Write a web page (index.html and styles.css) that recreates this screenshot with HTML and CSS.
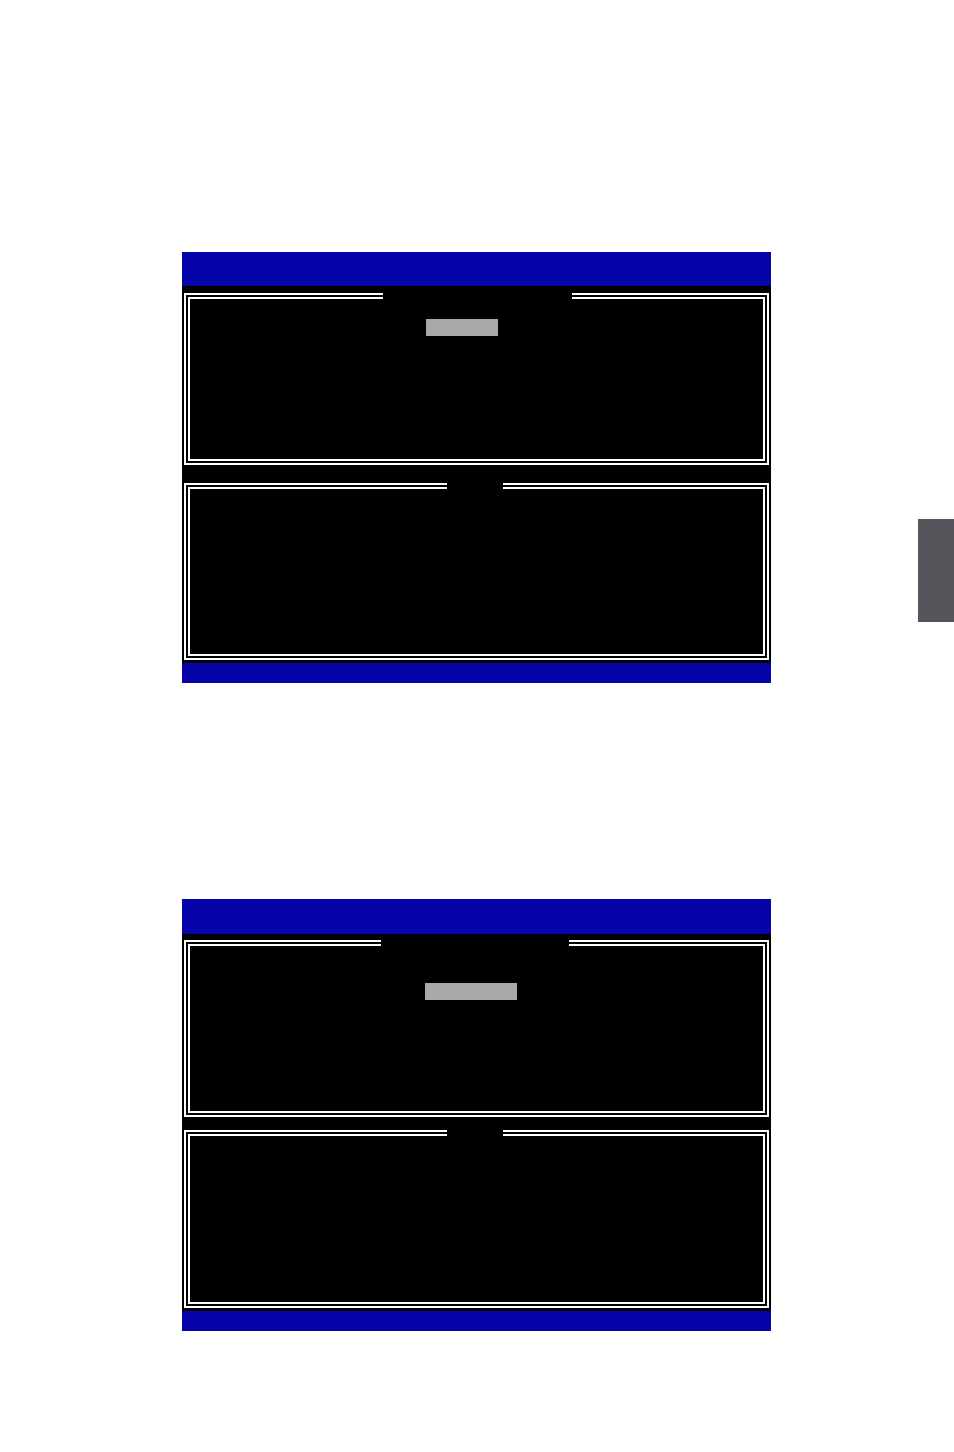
FILE: index.html
```html
<!DOCTYPE html>
<html lang="en">
<head>
<meta charset="utf-8">
<title>Setup screens</title>
<link rel="stylesheet" href="styles.css">
</head>
<body>
<div class="page">
  <section class="screen screen-a">
    <div class="screen-bar screen-bar-top"></div>
    <div class="screen-body">
      <div class="panel panel-main">
        <span class="panel-title title-wide"></span>
        <div class="hl hl-short"></div>
      </div>
      <div class="panel panel-help">
        <span class="panel-title title-narrow"></span>
      </div>
    </div>
    <div class="screen-bar screen-bar-bottom"></div>
  </section>

  <section class="screen screen-b">
    <div class="screen-bar screen-bar-top"></div>
    <div class="screen-body">
      <div class="panel panel-main">
        <span class="panel-title title-wide"></span>
        <div class="hl hl-long"></div>
      </div>
      <div class="panel panel-help">
        <span class="panel-title title-narrow"></span>
      </div>
    </div>
    <div class="screen-bar screen-bar-bottom"></div>
  </section>

  <div class="thumb-tab"></div>
</div>
</body>
</html>
```

FILE: styles.css
```css
html, body {
  margin: 0;
  padding: 0;
  background: #ffffff;
}

.page {
  position: relative;
  width: 954px;
  height: 1452px;
  padding-top: 252px;
  box-sizing: border-box;
}

.screen {
  width: 589px;
  margin-left: 182px;
  display: flex;
  flex-direction: column;
}

.screen-b {
  margin-top: 216px;
}

.screen-bar {
  background: #0404a9;
}

.screen-bar-top {
  height: 34px;
}

.screen-b .screen-bar-top {
  height: 35px;
}

.screen-bar-bottom {
  height: 20px;
}

.screen-body {
  background: #000000;
  padding: 7px 2px 3px;
  display: flex;
  flex-direction: column;
}

.screen-b .screen-body {
  padding-top: 6px;
}

/* double-ruled frame: thick outer line, thin inner line */
.panel {
  position: relative;
  box-sizing: border-box;
  border: 2px solid #ffffff;
  box-shadow: inset 0 0 0 2px #000000, inset 0 0 0 4px #ffffff;
  padding-left: 240px;
}

.screen-a .panel-main {
  height: 172px;
  padding-top: 24px;
}

.screen-a .panel-help {
  height: 177px;
  margin-top: 18px;
}

.screen-b .panel-main {
  height: 177px;
  padding-top: 41px;
}

.screen-b .panel-help {
  height: 178px;
  margin-top: 13px;
}

/* break in the top rule where the panel caption sits */
.panel-title {
  position: absolute;
  top: -2px;
  height: 6px;
  background: #000000;
}

.screen-a .title-wide {
  left: 197px;
  width: 189px;
}

.screen-b .title-wide {
  left: 195px;
  width: 188px;
}

.title-narrow {
  left: 261px;
  width: 56px;
}

.hl {
  height: 17px;
  background: #a9a9ac;
}

.hl-short {
  width: 72px;
  margin-left: 0;
}

.hl-long {
  width: 92px;
  margin-left: -1px;
}

.thumb-tab {
  position: absolute;
  right: 0;
  top: 519px;
  width: 36px;
  height: 103px;
  background: #55565b;
}
```
